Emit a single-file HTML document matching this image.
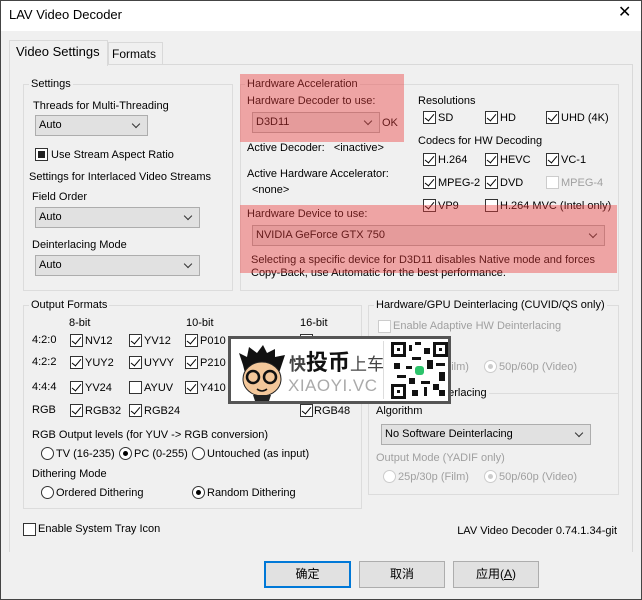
<!DOCTYPE html>
<html><head><meta charset="utf-8"><style>
*{margin:0;padding:0;box-sizing:border-box}
body{width:642px;height:600px;overflow:hidden;background:#f0f0f0;font-family:"Liberation Sans","Noto Sans CJK SC",sans-serif;font-size:11px;color:#000;position:relative}
.a{position:absolute}
.t{position:absolute;white-space:nowrap;line-height:14px}
.g{position:absolute;border:1px solid #dcdcdc}
.gt{position:absolute;white-space:nowrap;line-height:14px;background:#f0f0f0;padding:0 2px}
.cb{position:absolute;width:13px;height:13px;border:1px solid #333;background:#fff}
.cb.on::after{content:'';position:absolute;left:3px;top:0px;width:4px;height:8px;border:solid #000;border-width:0 1.5px 1.5px 0;transform:rotate(40deg)}
.cb.dis{border-color:#ccc}
.rb{position:absolute;width:13px;height:13px;border:1px solid #333;border-radius:50%;background:#fff}
.rb.on::after{content:'';position:absolute;left:3px;top:3px;width:5px;height:5px;border-radius:50%;background:#000}
.rb.dis{border-color:#ccc}
.rb.dis.on::after{background:#ccc}
.cmb{position:absolute;height:21px;border:1px solid #adadad;background:#e1e1e1;line-height:19px;padding-left:3px}
.cmb::after{content:'';position:absolute;right:8px;top:5px;width:5px;height:5px;border:solid #333;border-width:0 1px 1px 0;transform:rotate(45deg)}
.dis-t{color:#a0a0a0}
.btn{position:absolute;height:27px;border:1px solid #adadad;background:#e1e1e1;text-align:center;line-height:25px;font-size:12px}
.red{position:absolute;background:rgba(235,60,60,0.42);z-index:5}
</style></head><body>
<div class="a" style="left:0;top:0;width:642px;height:600px;border:1px solid #444;z-index:20;pointer-events:none"></div>
<div class="a" style="left:0;top:0;width:642px;height:31px;background:#fff"></div>
<div class="t" style="left:9px;top:8px;font-size:13px">LAV Video Decoder</div>
<div class="t" style="left:618px;top:6px;font-size:16px;font-weight:300">✕</div>

<div class="a" style="left:9px;top:64px;width:624px;height:488px;border:1px solid #d9d9d9;border-bottom:none;background:#f0f0f0"></div>
<div class="a" style="left:9px;top:40px;width:99px;height:26px;border:1px solid #d9d9d9;border-bottom:none;background:#f0f0f0"></div>
<div class="t" style="left:16px;top:45px;font-size:13px">Video Settings</div>
<div class="a" style="left:108px;top:42px;width:55px;height:22px;border:1px solid #d9d9d9;border-bottom:none;background:#f0f0f0"></div>
<div class="t" style="left:112px;top:47px;font-size:12px">Formats</div>

<div class="g" style="left:23px;top:84px;width:210px;height:207px"></div>
<div class="gt" style="left:29px;top:77px">Settings</div>
<div class="t" style="left:33px;top:99px">Threads for Multi-Threading</div>
<div class="cmb" style="left:35px;top:115px;width:113px">Auto</div>
<div class="a" style="left:35px;top:148px;width:13px;height:13px;border:1px solid #333;background:#fff"><div class="a" style="left:2px;top:2px;width:7px;height:7px;background:#222"></div></div>
<div class="t" style="left:51px;top:148px">Use Stream Aspect Ratio</div>
<div class="t" style="left:29px;top:170px">Settings for Interlaced Video Streams</div>
<div class="t" style="left:32px;top:190px">Field Order</div>
<div class="cmb" style="left:35px;top:207px;width:165px">Auto</div>
<div class="t" style="left:32px;top:238px">Deinterlacing Mode</div>
<div class="cmb" style="left:35px;top:255px;width:165px">Auto</div>

<div class="g" style="left:240px;top:84px;width:379px;height:207px"></div>
<div class="gt" style="left:245px;top:77px">Hardware Acceleration</div>
<div class="t" style="left:247px;top:94px">Hardware Decoder to use:</div>
<div class="cmb" style="left:252px;top:112px;width:128px">D3D11</div>
<div class="t" style="left:382px;top:116px">OK</div>
<div class="t" style="left:247px;top:141px">Active Decoder:&nbsp;&nbsp; &lt;inactive&gt;</div>
<div class="t" style="left:247px;top:167px">Active Hardware Accelerator:</div>
<div class="t" style="left:252px;top:183px">&lt;none&gt;</div>
<div class="t" style="left:418px;top:94px">Resolutions</div>
<div class="cb on" style="left:423px;top:111px"></div><div class="t" style="left:438px;top:111px">SD</div>
<div class="cb on" style="left:485px;top:111px"></div><div class="t" style="left:500px;top:111px">HD</div>
<div class="cb on" style="left:546px;top:111px"></div><div class="t" style="left:561px;top:111px">UHD (4K)</div>
<div class="t" style="left:418px;top:134px">Codecs for HW Decoding</div>
<div class="cb on" style="left:423px;top:153px"></div><div class="t" style="left:438px;top:153px">H.264</div>
<div class="cb on" style="left:485px;top:153px"></div><div class="t" style="left:500px;top:153px">HEVC</div>
<div class="cb on" style="left:546px;top:153px"></div><div class="t" style="left:561px;top:153px">VC-1</div>
<div class="cb on" style="left:423px;top:176px"></div><div class="t" style="left:438px;top:176px">MPEG-2</div>
<div class="cb on" style="left:485px;top:176px"></div><div class="t" style="left:500px;top:176px">DVD</div>
<div class="cb dis" style="left:546px;top:176px"></div><div class="t dis-t" style="left:561px;top:176px">MPEG-4</div>
<div class="cb on" style="left:423px;top:199px"></div><div class="t" style="left:438px;top:199px">VP9</div>
<div class="cb" style="left:485px;top:199px"></div><div class="t" style="left:500px;top:199px">H.264 MVC (Intel only)</div>
<div class="t" style="left:247px;top:207px">Hardware Device to use:</div>
<div class="cmb" style="left:252px;top:225px;width:353px">NVIDIA GeForce GTX 750</div>
<div class="t" style="left:251px;top:253px">Selecting a specific device for D3D11 disables Native mode and forces</div>
<div class="t" style="left:251px;top:266px">Copy-Back, use Automatic for the best performance.</div>
<div class="red" style="left:240px;top:74px;width:164px;height:68px"></div>
<div class="red" style="left:240px;top:205px;width:377px;height:68px"></div>

<div class="g" style="left:23px;top:305px;width:339px;height:204px"></div>
<div class="gt" style="left:29px;top:298px">Output Formats</div>
<div class="t" style="left:69px;top:316px">8-bit</div>
<div class="t" style="left:186px;top:316px">10-bit</div>
<div class="t" style="left:300px;top:316px">16-bit</div>
<div class="t" style="left:32px;top:333px">4:2:0</div>
<div class="t" style="left:32px;top:355px">4:2:2</div>
<div class="t" style="left:32px;top:380px">4:4:4</div>
<div class="t" style="left:32px;top:403px">RGB</div>
<div class="cb on" style="left:70px;top:334px"></div><div class="t" style="left:85px;top:334px">NV12</div>
<div class="cb on" style="left:129px;top:334px"></div><div class="t" style="left:144px;top:334px">YV12</div>
<div class="cb on" style="left:185px;top:334px"></div><div class="t" style="left:200px;top:334px">P010</div>
<div class="cb on" style="left:300px;top:334px"></div>
<div class="cb on" style="left:70px;top:356px"></div><div class="t" style="left:85px;top:356px">YUY2</div>
<div class="cb on" style="left:129px;top:356px"></div><div class="t" style="left:144px;top:356px">UYVY</div>
<div class="cb on" style="left:185px;top:356px"></div><div class="t" style="left:200px;top:356px">P210</div>
<div class="cb on" style="left:70px;top:381px"></div><div class="t" style="left:85px;top:381px">YV24</div>
<div class="cb" style="left:129px;top:381px"></div><div class="t" style="left:144px;top:381px">AYUV</div>
<div class="cb on" style="left:185px;top:381px"></div><div class="t" style="left:200px;top:381px">Y410</div>
<div class="cb on" style="left:70px;top:404px"></div><div class="t" style="left:85px;top:404px">RGB32</div>
<div class="cb on" style="left:129px;top:404px"></div><div class="t" style="left:144px;top:404px">RGB24</div>
<div class="cb on" style="left:300px;top:404px"></div><div class="t" style="left:314px;top:404px">RGB48</div>
<div class="t" style="left:32px;top:428px">RGB Output levels (for YUV -&gt; RGB conversion)</div>
<div class="rb" style="left:41px;top:447px"></div><div class="t" style="left:56px;top:447px">TV (16-235)</div>
<div class="rb on" style="left:119px;top:447px"></div><div class="t" style="left:134px;top:447px">PC (0-255)</div>
<div class="rb" style="left:192px;top:447px"></div><div class="t" style="left:207px;top:447px">Untouched (as input)</div>
<div class="t" style="left:32px;top:467px">Dithering Mode</div>
<div class="rb" style="left:41px;top:486px"></div><div class="t" style="left:56px;top:486px">Ordered Dithering</div>
<div class="rb on" style="left:192px;top:486px"></div><div class="t" style="left:207px;top:486px">Random Dithering</div>

<div class="g" style="left:368px;top:305px;width:251px;height:89px"></div>
<div class="gt" style="left:374px;top:298px">Hardware/GPU Deinterlacing (CUVID/QS only)</div>
<div class="cb dis" style="left:378px;top:320px"></div><div class="t dis-t" style="left:393px;top:319px">Enable Adaptive HW Deinterlacing</div>
<div class="rb dis" style="left:383px;top:360px"></div><div class="t dis-t" style="left:398px;top:360px">25p/30p (Film)</div>
<div class="rb dis on" style="left:484px;top:360px"></div><div class="t dis-t" style="left:499px;top:360px">50p/60p (Video)</div>
<div class="g" style="left:368px;top:393px;width:251px;height:102px"></div>
<div class="gt" style="left:374px;top:386px">Software Deinterlacing</div>
<div class="t" style="left:376px;top:404px">Algorithm</div>
<div class="cmb" style="left:381px;top:424px;width:210px">No Software Deinterlacing</div>
<div class="t dis-t" style="left:376px;top:451px">Output Mode (YADIF only)</div>
<div class="rb dis" style="left:383px;top:470px"></div><div class="t dis-t" style="left:398px;top:470px">25p/30p (Film)</div>
<div class="rb dis on" style="left:484px;top:470px"></div><div class="t dis-t" style="left:499px;top:470px">50p/60p (Video)</div>

<div class="cb" style="left:23px;top:523px"></div><div class="t" style="left:38px;top:522px">Enable System Tray Icon</div>
<div class="t" style="right:25px;top:524px">LAV Video Decoder 0.74.1.34-git</div>

<div class="a" style="left:228px;top:336px;width:223px;height:68px;background:#fff;border:3px solid #555;z-index:8">
  <svg class="a" style="left:4px;top:4px" width="56" height="58" viewBox="0 0 56 58">
    <path d="M8 22 L4 10 L12 14 L14 4 L22 10 L28 2 L32 10 L40 6 L40 14 L50 12 L46 24 L44 30 L10 30Z" fill="#111"/>
    <ellipse cx="27" cy="36" rx="19" ry="17" fill="#f3c79a" stroke="#222"/>
    <circle cx="18" cy="34" r="6" fill="none" stroke="#111" stroke-width="2.5"/>
    <circle cx="35" cy="34" r="6" fill="none" stroke="#111" stroke-width="2.5"/>
    <path d="M22 46 Q27 50 32 46" stroke="#111" fill="none" stroke-width="1.5"/>
    <path d="M18 52 L36 52 L34 58 L20 58Z" fill="#222"/>
  </svg>
  <div class="t" style="left:58px;top:14px;font-size:17px;font-weight:bold;color:#444;line-height:20px">快<span style="font-size:22px;color:#111">投币</span><span style="font-weight:normal">上车</span></div>
  <div class="t" style="left:57px;top:37px;font-size:17px;color:#aaa;line-height:20px;letter-spacing:0.5px">XIAOYI.VC</div>
  <div class="a" style="left:152px;top:2px;width:1px;height:58px;background:#ddd"></div>
  <svg class="a" style="left:160px;top:3px" width="57" height="57" viewBox="0 0 19 19">
    <rect width="19" height="19" fill="#fff"/>
    <g fill="#111"><rect x="0" y="0" width="5" height="5"/><rect x="14" y="0" width="5" height="5"/><rect x="0" y="14" width="5" height="5"/>
    <rect x="6" y="1" width="1" height="2"/><rect x="8" y="0" width="2" height="1"/><rect x="11" y="2" width="2" height="2"/><rect x="7" y="5" width="3" height="1"/><rect x="1" y="7" width="2" height="2"/><rect x="5" y="8" width="2" height="1"/><rect x="12" y="6" width="2" height="3"/><rect x="15" y="7" width="3" height="1"/><rect x="16" y="10" width="2" height="3"/><rect x="6" y="12" width="2" height="2"/><rect x="10" y="13" width="3" height="1"/><rect x="7" y="16" width="2" height="2"/><rect x="11" y="15" width="1" height="3"/><rect x="14" y="14" width="2" height="2"/><rect x="16" y="16" width="2" height="2"/><rect x="2" y="11" width="3" height="1"/></g>
    <g fill="#fff"><rect x="1" y="1" width="3" height="3"/><rect x="15" y="1" width="3" height="3"/><rect x="1" y="15" width="3" height="3"/></g>
    <g fill="#111"><rect x="2" y="2" width="1" height="1"/><rect x="16" y="2" width="1" height="1"/><rect x="2" y="16" width="1" height="1"/></g>
    <rect x="8" y="8" width="3" height="3" rx="1" fill="#2cc36b"/>
  </svg>
</div>

<div class="btn" style="left:264px;top:561px;width:87px;border:2px solid #0078d7;line-height:23px">确定</div>
<div class="btn" style="left:359px;top:561px;width:86px">取消</div>
<div class="btn" style="left:453px;top:561px;width:86px">应用(<u>A</u>)</div>
</body></html>
